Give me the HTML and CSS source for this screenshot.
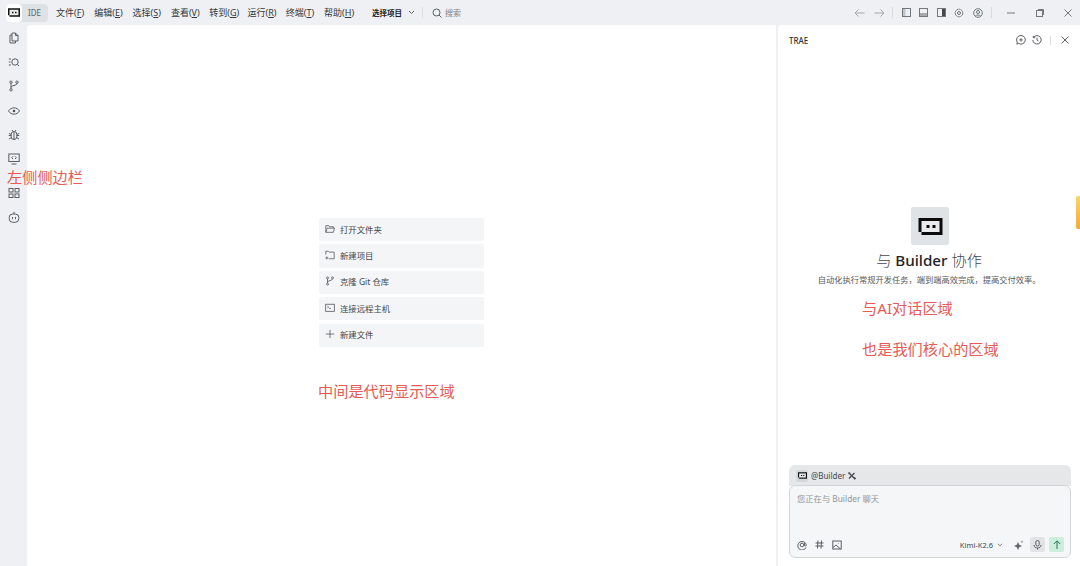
FILE: index.html
```html
<!DOCTYPE html>
<html lang="zh-CN">
<head>
    <meta charset="UTF-8">
    <title>TRAE</title>
    <link rel="stylesheet" href="styles.css">
</head>
<body>
    <header class="titlebar">
        <div class="mode-switch">
            <span class="mode-logo">
                <svg width="12" height="9" viewBox="0 0 24 17"><path d="M0 0H24V17H3V14H0z" fill="#111"/><rect x="3" y="3" width="18" height="11" fill="#e8eaec"/><rect x="8" y="7" width="3" height="3" fill="#111"/><rect x="14" y="7" width="3" height="3" fill="#111"/></svg>
            </span>
            <span class="mode-label">IDE</span>
        </div>
        <nav class="menu">
            <span>文件(<u>F</u>)</span>
            <span>编辑(<u>E</u>)</span>
            <span>选择(<u>S</u>)</span>
            <span>查看(<u>V</u>)</span>
            <span>转到(<u>G</u>)</span>
            <span>运行(<u>R</u>)</span>
            <span>终端(<u>T</u>)</span>
            <span>帮助(<u>H</u>)</span>
        </nav>
        <div class="project">
            <b>选择项目</b>
            <svg width="7" height="5" viewBox="0 0 7 5"><path d="M1 1l2.500 2.500L6 1" class="line"/></svg>
        </div>
        <div class="search">
            <svg width="10" height="10" viewBox="0 0 10 10"><circle cx="4.500" cy="4.500" r="3.500" class="line"/><path d="M7 7l2.500 2.500" class="line"/></svg>
            <span>搜索</span>
        </div>
        <div class="bar-tools">
            <svg class="dim" width="10" height="8" viewBox="0 0 10 8"><path d="M0 4h9.500M3.500 .5L0 4l3.500 3.500" class="line"/></svg>
            <svg class="dim" width="10" height="8" viewBox="0 0 10 8"><path d="M10 4H.5M6.500 .5L10 4 6.500 7.500" class="line"/></svg>
            <i class="bar-sep"></i>
            <svg width="9" height="9" viewBox="0 0 9 9"><rect x=".5" y=".5" width="8" height="8" class="line"/><rect x="1" y="1" width="2.500" height="7" fill="#c2c5c9"/></svg>
            <svg width="9" height="9" viewBox="0 0 9 9"><rect x=".5" y=".5" width="8" height="8" class="line"/><rect x="1" y="5" width="7" height="3" fill="#a6aaaf"/></svg>
            <svg width="9" height="9" viewBox="0 0 9 9"><rect x=".5" y=".5" width="8" height="8" class="line"/><rect x="5" y="1" width="3" height="7" fill="#44484d"/></svg>
            <svg width="10" height="10" viewBox="0 0 10 10"><circle cx="5" cy="5" r="3.800" class="line" stroke-dasharray="2 .4"/><circle cx="5" cy="5" r="1.500" class="line"/></svg>
            <svg width="10" height="10" viewBox="0 0 10 10"><circle cx="5" cy="5" r="4.300" class="line"/><circle cx="5" cy="4" r="1.500" class="line"/><path d="M2.300 8c.6-1.300 4.800-1.300 5.400 0" class="line"/></svg>
            <i class="bar-sep"></i>
        </div>
        <div class="win-btns">
            <svg width="8" height="8" viewBox="0 0 8 8"><path d="M0 4h8" class="line"/></svg>
            <svg width="8" height="8" viewBox="0 0 8 8"><rect x=".5" y="1.500" width="6" height="6" class="line"/><path d="M2 .5h5.500V6" class="line"/></svg>
            <svg width="8" height="8" viewBox="0 0 8 8"><path d="M.5 .5l7 7M7.500 .5l-7 7" class="line"/></svg>
        </div>
    </header>

    <div class="workspace">
        <aside class="sidebar">
            <svg viewBox="0 0 12 12"><path d="M4 1h3.500L10 3.500V9H4zM7.500 1v2.500H10M4 3H2v8h5.500V9" class="line"/></svg>
            <svg viewBox="0 0 12 12"><circle cx="7" cy="6" r="3.200" class="line"/><path d="M9.300 8.300L11 10M.8 3H3M.8 6H2.500M.8 9H3" class="line"/></svg>
            <svg viewBox="0 0 12 12"><circle cx="3" cy="2.200" r="1.200" class="line"/><circle cx="3" cy="9.800" r="1.200" class="line"/><circle cx="9" cy="2.200" r="1.200" class="line"/><path d="M3 3.400v5.200M9 3.400C9 6 3 5 3 7.500" class="line"/></svg>
            <svg viewBox="0 0 12 12"><path d="M.5 6C3 1.800 9 1.800 11.500 6 9 10.200 3 10.200 .5 6z" class="line"/><circle cx="6" cy="6" r="1.300" fill="#4a4f55"/></svg>
            <svg viewBox="0 0 12 12"><rect x="3.200" y="2.500" width="5.600" height="8" rx="2.800" class="line"/><path d="M6 2.500v8M.8 4.500l2.400 1M11.200 4.500l-2.400 1M.8 6.500h2.400M11.200 6.500H8.800M1 10l2.300-1.500M11 10L8.700 8.500M4 1l1 1.500M8 1L7 2.500" class="line"/></svg>
            <svg viewBox="0 0 12 12"><rect x=".8" y="1" width="10.400" height="7.500" class="line"/><path d="M3.500 11h5" class="line"/><path d="M5 3.300L3.700 4.700 5 6M7 3.300l1.300 1.400L7 6" class="line"/></svg>
            <svg class="side-extra" viewBox="0 0 12 12"><rect x="1" y="1.500" width="4" height="3.500" class="line"/><rect x="7" y="1.500" width="4" height="3.500" class="line"/><rect x="1" y="7" width="4" height="3.500" class="line"/><rect x="7" y="7" width="4" height="3.500" class="line"/></svg>
            <svg viewBox="0 0 12 12"><rect x="1.200" y="3" width="9.600" height="8.300" rx="3.500" class="line"/><path d="M6 3V.8M4.500 6v2.200M7.500 6v2.200" class="line"/></svg>
        </aside>
        <span class="note note-side">左侧侧边栏</span>

        <main class="editor">
            <ul class="welcome">
                <li>
                    <svg viewBox="0 0 12 12"><path d="M1 10V2h3.500l1 1.300H10V5M1 10l1.500-5H11.500L10 10z" class="line"/></svg>
                    打开文件夹
                </li>
                <li>
                    <svg viewBox="0 0 12 12"><path d="M1 5.500V1.500h3l1 1h6v8H4.500" class="line"/><path d="M.5 9.500h3.500M2.200 7.800v3.500" class="line"/></svg>
                    新建项目
                </li>
                <li>
                    <svg viewBox="0 0 12 12"><circle cx="3" cy="2.200" r="1.200" class="line"/><circle cx="3" cy="9.800" r="1.200" class="line"/><circle cx="9" cy="2.200" r="1.200" class="line"/><path d="M3 3.400v5.200M9 3.400C9 6 3 5 3 7.500" class="line"/></svg>
                    克隆 Git 仓库
                </li>
                <li>
                    <svg viewBox="0 0 12 12"><rect x=".8" y="1.500" width="10.400" height="8.500" class="line"/><path d="M3 4l1.300 1L3 6M5 6.500h2" class="line"/></svg>
                    连接远程主机
                </li>
                <li>
                    <svg viewBox="0 0 12 12"><path d="M6 1v10M1 6h10" class="line"/></svg>
                    新建文件
                </li>
            </ul>
            <p class="note note-editor">中间是代码显示区域</p>
        </main>

        <section class="chat">
            <div class="chat-head">
                <span class="chat-name">TRAE</span>
                <div class="chat-tools">
                    <svg width="10" height="10" viewBox="0 0 10 10"><path d="M5 .5a4.300 4.300 0 1 1-2.500 7.800L.8 9.200l.5-2A4.300 4.300 0 0 1 5 .5z" class="line"/><path d="M5 3.200v3.400M3.300 4.900h3.400" class="line"/></svg>
                    <svg width="10" height="10" viewBox="0 0 10 10"><path d="M1.500 2.500A4.200 4.200 0 1 1 .8 5M1.300 .8v1.900h1.900M5 2.800V5l1.500 1" class="line"/></svg>
                    <i class="bar-sep"></i>
                    <svg width="8" height="8" viewBox="0 0 8 8"><path d="M.5 .5l7 7M7.500 .5l-7 7" class="line"/></svg>
                </div>
            </div>

            <div class="chat-body">
                <div class="agent-tile">
                    <svg width="25" height="17" viewBox="0 0 24 17"><path d="M0 0H24V17H3V14H0z" fill="#0c0c0c"/><rect x="3" y="3" width="18" height="11" fill="#e8eaec"/><rect x="8" y="7" width="3" height="3" fill="#0c0c0c"/><rect x="14" y="7" width="3" height="3" fill="#0c0c0c"/></svg>
                </div>
                <h2 class="agent-title">与 <b>Builder</b> 协作</h2>
                <p class="agent-desc">自动化执行常规开发任务，端到端高效完成，提高交付效率。</p>
                <div class="chat-notes">
                    <p class="note">与AI对话区域</p>
                    <p class="note">也是我们核心的区域</p>
                </div>
            </div>

            <div class="composer">
                <div class="composer-tag">
                    <span class="tag-logo">
                        <svg width="9" height="7" viewBox="0 0 24 17"><path d="M0 0H24V17H3V14H0z" fill="#111"/><rect x="3" y="3" width="18" height="11" fill="#e8eaec"/><rect x="8" y="7" width="3" height="3" fill="#111"/><rect x="14" y="7" width="3" height="3" fill="#111"/></svg>
                    </span>
                    <span>@Builder</span>
                    <svg class="tag-tool" width="8" height="8" viewBox="0 0 8 8"><path d="M1.500 1.500l5 5M6.500 1l-5.500 5.500" stroke="#44484d" stroke-width="1.300" fill="none"/><path d="M0 1l1-1 1.500 1L1 2.500zM5.500 5.500L7 5l1 1.500L6.500 8z" fill="#44484d"/></svg>
                </div>
                <div class="composer-box">
                    <p class="composer-hint">您正在与 Builder 聊天</p>
                    <div class="composer-foot">
                        <svg width="10" height="10" viewBox="0 0 10 10"><path d="M9 7.500A4.300 4.300 0 1 1 9.300 5c0 1.500-1.800 1.700-1.800.3V3.200" class="line"/><circle cx="5" cy="5" r="1.800" class="line"/></svg>
                        <svg width="9" height="9" viewBox="0 0 9 9"><path d="M3 .5L2.500 8.500M6.500 .5L6 8.500M.5 3h8M.5 6h8" class="line"/></svg>
                        <svg width="10" height="10" viewBox="0 0 10 10"><rect x=".8" y="1" width="8.400" height="8" class="line"/><path d="M1 7.500L4 5l4.500 4M6.500 3.500h.5" class="line"/></svg>
                        <span class="model">Kimi-K2.6</span>
                        <svg class="model-arrow" width="6" height="4" viewBox="0 0 7 5"><path d="M1 1l2.500 2.500L6 1" class="line"/></svg>
                        <svg class="spark" width="10" height="10" viewBox="0 0 10 10"><path d="M4 2.500L5 5l2.500 1L5 7 4 9.500 3 7 .5 6 3 5zM8 .5v2.500M6.800 1.700h2.400" fill="#5a5f65" stroke="#5a5f65" stroke-width=".4"/></svg>
                        <span class="foot-btn btn-mic">
                            <svg width="9" height="10" viewBox="0 0 9 10"><rect x="2.800" y=".5" width="3.400" height="5.500" rx="1.700" class="line"/><path d="M1 5c0 4 7 4 7 0M4.500 8v1.500" class="line"/></svg>
                        </span>
                        <span class="foot-btn btn-send">
                            <svg width="8" height="9" viewBox="0 0 8 9"><path d="M4 9V1M.8 4L4 .8 7.200 4" fill="none" stroke="#2f6f55" stroke-width="1"/></svg>
                        </span>
                    </div>
                </div>
            </div>
        </section>
    </div>
    <span class="edge-tab"></span>
</body>
</html>
```

FILE: styles.css
```css
* {
    box-sizing: border-box;
}

html, body {
    margin: 0;
    height: 566px;
    overflow: hidden;
}

body {
    position: relative;
    display: flex;
    flex-direction: column;
    background-color: #eef0f3;
    color: #33373b;
    font-family: "Noto Sans", "Noto Sans CJK SC", sans-serif;
    font-size: 8.400px;
}

p, h2, ul {
    margin: 0;
    padding: 0;
}

.line {
    fill: none;
    stroke: #5a5f65;
    stroke-width: 1;
}

.bar-tools .line, .win-btns .line {
    stroke: #73787e;
}

.titlebar {
    display: flex;
    align-items: center;
    height: 25px;
    padding-left: 6px;
    flex: none;
}

.mode-switch {
    display: flex;
    align-items: center;
    width: 42px;
    height: 18px;
    background-color: #dfe2e5;
    border-radius: 4px;
}

.mode-logo {
    display: flex;
    align-items: center;
    justify-content: center;
    width: 16px;
    height: 18px;
    background-color: #fff;
    border-radius: 4px;
}

.mode-label {
    margin-left: 6px;
    font-size: 8px;
    color: #60656b;
}

.menu {
    display: flex;
    gap: 11.300px;
    margin-left: 8px;
    font-size: 9px;
    white-space: nowrap;
    width: 304px;
}

.menu span {
    width: 27px;
    flex: none;
}

.project {
    display: flex;
    align-items: center;
    gap: 6px;
    margin-left: 12px;
    font-size: 7.500px;
    color: #222;
    width: 51px;
    padding-right: 7px;
    border-right: 1px solid #dcdfe2;
    height: 11px;
    flex: none;
}

.project b {
    white-space: nowrap;
    flex: none;
}

.search {
    display: flex;
    align-items: center;
    gap: 3px;
    margin-left: 9px;
    font-size: 8px;
    color: #80858b;
}

.bar-tools {
    display: flex;
    align-items: center;
    gap: 8.500px;
    margin-left: auto;
}

.bar-tools .dim {
    opacity: .6;
}

.bar-sep {
    display: block;
    width: 1px;
    height: 11px;
    background-color: #d9dce0;
}

.win-btns {
    display: flex;
    align-items: center;
    gap: 20.500px;
    margin-left: 15px;
    padding-right: 8px;
}

.workspace {
    display: flex;
    flex: 1;
    min-height: 0;
}

.sidebar {
    display: flex;
    flex-direction: column;
    align-items: center;
    gap: 12.200px;
    width: 27px;
    padding-top: 7px;
    flex: none;
}

.sidebar svg {
    width: 12px;
    height: 12px;
}

.sidebar .side-extra {
    margin-top: 9.500px;
}

.editor {
    flex: 1;
    display: flex;
    flex-direction: column;
    align-items: center;
    padding-top: 193px;
    background-color: #fff;
    border-radius: 4px 0 0 0;
}

.welcome {
    list-style: none;
    display: flex;
    flex-direction: column;
    gap: 3.200px;
    width: 165px;
}

.welcome li {
    display: flex;
    align-items: center;
    gap: 5px;
    height: 23.200px;
    padding: 0 0 2px 6px;
    background-color: #f4f5f6;
    border-radius: 2px;
    color: #44484d;
}

.welcome svg {
    width: 10px;
    height: 10px;
}

.note {
    font-size: 15.200px;
    line-height: 20px;
    color: #e85a55;
    white-space: nowrap;
}

.note-editor {
    align-self: flex-start;
    margin: 34px 0 0 291px;
}

.note-side {
    position: absolute;
    left: 7px;
    top: 167px;
}

.chat {
    display: flex;
    flex-direction: column;
    width: 302px;
    margin-left: 2px;
    flex: none;
    background-color: #fff;
    border-radius: 4px 0 0 0;
}

.chat-head {
    display: flex;
    align-items: center;
    justify-content: space-between;
    height: 30px;
    padding: 0 11px;
    flex: none;
}

.chat-name {
    font-size: 8px;
    font-weight: 500;
    color: #2e3236;
}

.chat-tools {
    display: flex;
    align-items: center;
    gap: 6px;
}

.chat-tools .bar-sep {
    margin: 0 4px 0 2px;
    height: 9px;
}

.chat-body {
    flex: 1;
    display: flex;
    flex-direction: column;
    align-items: center;
    padding-top: 152px;
}

.agent-tile {
    display: flex;
    align-items: center;
    justify-content: center;
    width: 38px;
    height: 38px;
    margin-left: 2px;
    background-color: #e0e3e5;
    border-radius: 2px;
}

.agent-title {
    margin-top: 3px;
    font-size: 15.200px;
    line-height: 24px;
    font-weight: 300;
    color: #44484d;
}

.agent-title b {
    font-weight: 500;
    color: #222;
}

.agent-desc {
    margin-top: 2px;
    font-size: 8.250px;
    line-height: 12px;
    color: #55595e;
}

.chat-notes {
    display: flex;
    flex-direction: column;
    gap: 20.500px;
    align-self: flex-start;
    margin: 12px 0 0 84px;
}

.composer {
    margin: 0 9px 8px 11px;
    flex: none;
}

.composer-tag {
    display: flex;
    align-items: center;
    gap: 3px;
    height: 21px;
    padding-left: 7px;
    background-color: #e5e7e9;
    border-radius: 6px 6px 0 0;
    font-size: 8px;
    color: #44484d;
}

.tag-logo {
    display: flex;
    align-items: center;
    justify-content: center;
    width: 12px;
    height: 12px;
    background-color: #d5d8db;
    border-radius: 2px;
}

.composer-box {
    height: 73px;
    padding: 7px 6px 5px 7px;
    background-color: #f4f6f7;
    border: 1px solid #d3d6d9;
    border-radius: 6px;
    margin-top: -1px;
    display: flex;
    flex-direction: column;
    justify-content: space-between;
}

.composer-hint {
    font-size: 8.300px;
    line-height: 12px;
    color: #90959a;
}

.composer-foot {
    display: flex;
    align-items: center;
    gap: 8px;
}

.model {
    margin-left: auto;
    font-size: 7.500px;
    color: #44484d;
}

.model-arrow {
    margin-left: -4px;
}

.spark {
    margin-left: 3px;
}

.foot-btn {
    display: flex;
    align-items: center;
    justify-content: center;
    width: 15px;
    height: 15px;
    border-radius: 2px;
}

.btn-mic {
    background-color: #e1e3e5;
    margin-left: -2px;
}

.btn-send {
    background-color: #cbeedd;
    margin-left: -4px;
}

.edge-tab {
    position: absolute;
    right: 0;
    top: 196px;
    width: 4px;
    height: 33px;
    background: linear-gradient(#f9d66a, #f2a93b);
    border-radius: 2px 0 0 2px;
}
```
